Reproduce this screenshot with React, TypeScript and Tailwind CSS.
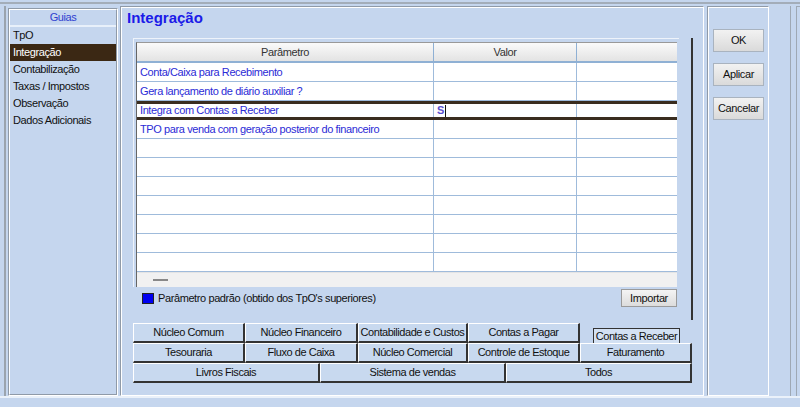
import React from "react";

const guias = ["TpO", "Integração", "Contabilização", "Taxas / Impostos", "Observação", "Dados Adicionais"];

const params = [
  { nome: "Conta/Caixa para Recebimento", valor: "" },
  { nome: "Gera lançamento de diário auxiliar ?", valor: "" },
  { nome: "Integra com Contas a Receber", valor: "S", ativo: true },
  { nome: "TPO para venda com geração posterior do financeiro", valor: "" },
];

const font = { fontFamily: '"Liberation Sans", Arial, sans-serif' };

function Tab({ label, w, active }: { label: string; w: string; active?: boolean }) {
  if (active) {
    return (
      <div className={`${w} h-5 pt-[5px] pl-[13px]`}>
        <div className="w-[87px] h-[17px] border border-[#333] bg-[#d3e1f3] flex items-center justify-center whitespace-nowrap text-[11px] tracking-[-0.45px] text-[#111]">
          {label}
        </div>
      </div>
    );
  }
  return (
    <div
      className={`${w} h-5 flex items-center justify-center whitespace-nowrap text-[11px] tracking-[-0.45px] text-[#111] border-t border-l border-t-white border-l-white border-r-2 border-b-2 border-r-[#333] border-b-[#333] bg-[#c8d9ef]`}
    >
      {label}
    </div>
  );
}

export default function App() {
  return (
    <div className="w-[800px] h-[407px] bg-[#c5d6ee] overflow-hidden tracking-[-0.4px]" style={font}>
      <div className="h-[6px] pt-[2px]">
        <div className="h-[2px] bg-[#a3adb9]" />
      </div>
      <div className="flex h-[390px] ml-[4px] border-l-2 border-[#9ba4ae]">
        {/* left panel */}
        <div className="ml-[2px] mt-[2px] w-[110px] h-[388px] border border-[#8f9aa8] border-r-white border-b-white">
          <div className="h-full border border-white border-r-[#8f9aa8] border-b-[#8f9aa8]">
            <div className="h-[17px] text-center text-[11px] leading-[15px] text-[#2f3fd0] border-b-2 border-[#e8f0fa]">Guias</div>
            {guias.map((g) => (
              <div
                key={g}
                className={`h-[17px] leading-[17px] pl-[3px] text-[11px] ${g === "Integração" ? "bg-[#3b2814] text-white" : "text-[#111]"}`}
              >
                {g}
              </div>
            ))}
          </div>
        </div>

        {/* main panel */}
        <div className="ml-[2px] w-[584px] h-[390px] border border-[#8f9aa8] border-r-white border-b-white">
          <div className="h-full border-t border-l border-white flex flex-col">
            <div className="h-[30px] pt-[1px] pl-[5px] leading-[18px] text-[15px] tracking-normal font-bold text-[#1b1be8]">Integração</div>
            <div className="ml-[11px] w-[560px] h-[282px] flex flex-col border-r-2 border-[#333]">
              {/* grid */}
              <div className="w-[546px] h-[249px] border-l border-t border-[#eef3fa] pl-[2px] pt-[3px]">
                <div className="w-[541px] h-[245px] bg-white border-l border-[#666] border-t border-t-[#999] flex flex-col">
                  <div className="flex h-[20px] shrink-0 bg-gradient-to-b from-[#fafafa] to-[#e3e3e3] border-b-2 border-[#8fb0d4] text-[11px] text-[#333]">
                    <div className="w-[297px] flex items-center justify-center border-r border-[#8fb0d4]">Parâmetro</div>
                    <div className="w-[143px] flex items-center justify-center border-r border-[#8fb0d4]">Valor</div>
                    <div className="flex-1" />
                  </div>
                  {params.map((p) => (
                    <div
                      key={p.nome}
                      className={`flex h-[19px] shrink-0 text-[11px] text-[#2b2bd6] ${p.ativo ? "border-y-[3px] border-[#3a2d1f]" : "border-b border-[#9fbbdb]"}`}
                    >
                      <div className="w-[297px] pl-[3px] flex items-center border-r border-[#9fbbdb] whitespace-nowrap">{p.nome}</div>
                      <div className="w-[143px] pl-[3px] flex items-center border-r border-[#9fbbdb] font-bold text-[#5a4fd0]">
                        {p.valor}
                        {p.ativo && <span className="ml-[1px] w-px h-[12px] bg-[#111]" />}
                      </div>
                      <div className="flex-1" />
                    </div>
                  ))}
                  {Array.from({ length: 7 }).map((_, i) => (
                    <div key={i} className="flex h-[19px] shrink-0 border-b border-[#9fbbdb]">
                      <div className="w-[297px] border-r border-[#9fbbdb]" />
                      <div className="w-[143px] border-r border-[#9fbbdb]" />
                      <div className="flex-1" />
                    </div>
                  ))}
                  <div className="flex-1 bg-[#f1f1f1] border-t border-[#e4e4e4] flex items-center pl-[16px]">
                    <div className="w-[15px] h-[2px] bg-[#888]" />
                  </div>
                </div>
              </div>

              {/* legend */}
              <div className="flex items-center justify-between h-[18px] mt-[2px] pl-[9px] pr-[14px]">
                <div className="flex items-center text-[11px] text-[#111] whitespace-nowrap">
                  <div className="w-[12px] h-[11px] bg-[#0000f0] border border-[#222] mr-[4px]" />
                  Parâmetro padrão (obtido dos TpO's superiores)
                </div>
                <div className="w-[56px] h-[18px] bg-gradient-to-b from-[#f4f4f4] to-[#dcdcdc] border border-[#9a9a9a] text-[11px] text-[#111] flex items-center justify-center">
                  Importar
                </div>
              </div>
            </div>

            {/* tabs */}
            <div className="ml-[11px] mt-[3px] w-[560px] flex flex-col">
              <div className="flex">
                <Tab label="Núcleo Comum" w="w-[112px]" />
                <Tab label="Núcleo Financeiro" w="w-[113px]" />
                <Tab label="Contabilidade e Custos" w="w-[110px]" />
                <Tab label="Contas a Pagar" w="w-[112px]" />
                <Tab label="Contas a Receber" w="w-[112px]" active />
              </div>
              <div className="flex">
                <Tab label="Tesouraria" w="w-[112px]" />
                <Tab label="Fluxo de Caixa" w="w-[113px]" />
                <Tab label="Núcleo Comercial" w="w-[110px]" />
                <Tab label="Controle de Estoque" w="w-[112px]" />
                <Tab label="Faturamento" w="w-[112px]" />
              </div>
              <div className="flex">
                <Tab label="Livros Fiscais" w="w-[187px]" />
                <Tab label="Sistema de vendas" w="w-[186px]" />
                <Tab label="Todos" w="w-[186px]" />
              </div>
            </div>
          </div>
        </div>

        {/* right panel */}
        <div className="ml-[3px] w-[62px] h-[390px] border border-[#8f9aa8] border-r-white border-b-white">
          <div className="h-full border-t border-l border-white flex flex-col pl-[4px] pt-[21px] gap-[11px]">
            {["OK", "Aplicar", "Cancelar"].map((b) => (
              <div
                key={b}
                className="w-[51px] h-[23px] bg-gradient-to-b from-[#f2f2f2] to-[#dadada] border border-[#a9b3bf] text-[11px] text-[#111] flex items-center justify-center"
              >
                {b}
              </div>
            ))}
          </div>
        </div>
        <div className="ml-[21px] w-[6px] h-[390px] border-l border-[#9ea8b4]" />
        <div className="w-[4px] h-[390px] border-l border-[#9ea8b4] border-t border-t-[#9ea8b4]" />
      </div>
      <div className="h-[2px] bg-[#eaf1fa]" />
    </div>
  );
}
